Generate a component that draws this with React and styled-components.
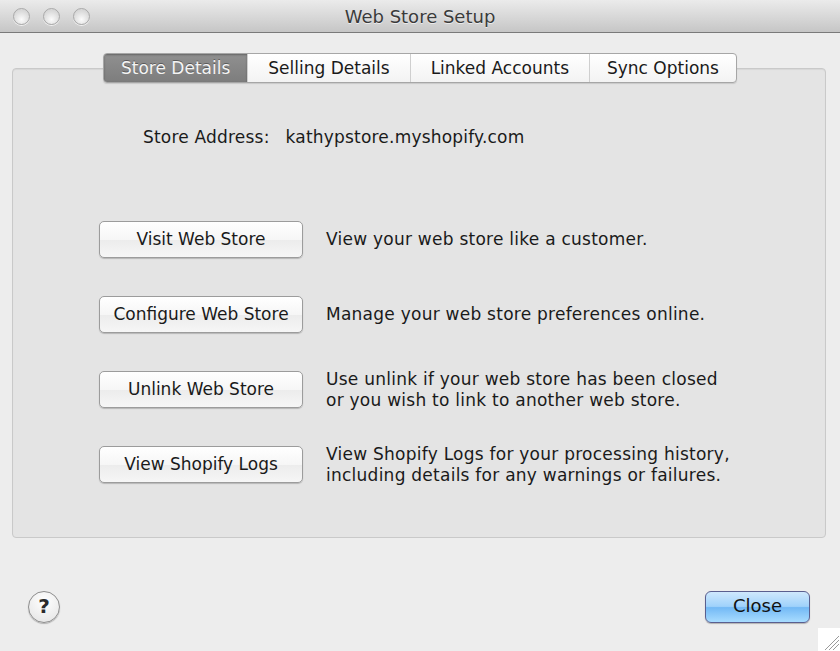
import React from "react";
import styled, { createGlobalStyle } from "styled-components";

const Global = createGlobalStyle`
  html, body {
    margin: 0;
    padding: 0;
    background: #ededed;
  }
  body {
    font-family: "DejaVu Sans", "Liberation Sans", sans-serif;
    color: #1a1a1a;
  }
`;

const Window = styled.div`
  width: 840px;
  height: 651px;
  display: flex;
  flex-direction: column;
  background: #ededed;
  position: relative;
  overflow: hidden;
`;

const TitleBar = styled.div`
  height: 33px;
  flex: none;
  display: flex;
  align-items: center;
  position: relative;
  background: linear-gradient(#ebebeb, #d5d5d5 60%, #c6c6c6);
  border-bottom: 1px solid #7a7a7a;
  box-sizing: border-box;
  padding-left: 13px;
  gap: 13px;
`;

const Light = styled.span`
  width: 17px;
  height: 17px;
  border-radius: 50%;
  background: radial-gradient(circle at 50% 70%, #fbfbfb, #d8d8d8 70%);
  border: 1px solid #a9a9a9;
  box-sizing: border-box;
  box-shadow: 0 1px 0 rgba(255, 255, 255, 0.7);
`;

const Title = styled.div`
  position: absolute;
  left: 0;
  right: 0;
  top: 0;
  bottom: 0;
  display: flex;
  align-items: center;
  justify-content: center;
  font-size: 18px;
  color: #3a3a3a;
  text-shadow: 0 1px 0 rgba(255, 255, 255, 0.6);
  pointer-events: none;
`;

const Body = styled.div`
  flex: 1;
  display: flex;
  flex-direction: column;
  padding: 20px 14px 0 12px;
`;

const TabArea = styled.div`
  display: flex;
  flex-direction: column;
  align-items: center;
`;

const Tabs = styled.div`
  display: flex;
  height: 30px;
  margin-left: 2px;
  border: 1px solid #a6a6a6;
  border-radius: 4px;
  background: linear-gradient(#ffffff, #f3f3f3);
  box-shadow: 0 1px 1px rgba(0, 0, 0, 0.12);
  overflow: hidden;
  position: relative;
  z-index: 1;
  box-sizing: border-box;
`;

const Tab = styled.div`
  display: flex;
  align-items: center;
  justify-content: center;
  padding: 0 ${(p) => p.$pad}px;
  font-size: 17px;
  color: ${(p) => (p.$active ? "#f4f4f4" : "#1a1a1a")};
  background: ${(p) =>
    p.$active ? "linear-gradient(#909090, #7d7d7d)" : "transparent"};
  text-shadow: ${(p) => (p.$active ? "0 -1px 0 rgba(0,0,0,0.35)" : "none")};
  box-shadow: ${(p) => (p.$active ? "inset 0 1px 2px rgba(0,0,0,0.3)" : "none")};
  & + & {
    border-left: 1px solid #cfcfcf;
  }
  &:nth-child(2) {
    border-left-color: #8a8a8a;
  }
`;

const Panel = styled.div`
  margin-top: -15px;
  height: 470px;
  box-sizing: border-box;
  background: #e4e4e4;
  border: 1px solid #c9c9c9;
  border-radius: 4px;
  box-shadow: inset 0 1px 1px rgba(0, 0, 0, 0.06);
  align-self: stretch;
  padding: 56px 0 0 86px;
  display: flex;
  flex-direction: column;
`;

const Address = styled.div`
  font-size: 17px;
  letter-spacing: 0.2px;
  padding-left: 44px;
  height: 24px;
  display: flex;
  align-items: center;
  gap: 16px;
  margin-bottom: 72px;
`;

const Rows = styled.div`
  display: flex;
  flex-direction: column;
  gap: 38px;
`;

const Row = styled.div`
  display: flex;
  align-items: center;
  height: 37px;
  gap: 23px;
`;

const Button = styled.button`
  width: 204px;
  height: 37px;
  flex: none;
  font-family: inherit;
  font-size: 17px;
  color: #1a1a1a;
  border: 1px solid #9c9c9c;
  border-radius: 5px;
  background: linear-gradient(#ffffff, #f6f6f6 50%, #ececec 51%, #f6f6f6);
  box-shadow: 0 1px 1px rgba(0, 0, 0, 0.2);
  padding: 0 0 2px;
  white-space: nowrap;
`;

const Desc = styled.div`
  font-size: 17px;
  letter-spacing: 0.25px;
  line-height: 21px;
  color: #1a1a1a;
  white-space: nowrap;
`;

const Footer = styled.div`
  flex: 1;
  display: flex;
  align-items: center;
  justify-content: space-between;
  padding: 24px 16px 0 16px;
`;

const Help = styled.div`
  width: 32px;
  height: 32px;
  border-radius: 50%;
  box-sizing: border-box;
  border: 1px solid #8e8e8e;
  background: radial-gradient(circle at 50% 30%, #ffffff, #e8e8e8 80%);
  box-shadow: 0 1px 1px rgba(0, 0, 0, 0.25);
  display: flex;
  align-items: center;
  justify-content: center;
  font-size: 20px;
  font-weight: bold;
  color: #2a2a2a;
  padding-bottom: 1px;
`;

const CloseButton = styled.button`
  width: 105px;
  height: 32px;
  font-family: inherit;
  font-size: 18px;
  color: #111;
  border: 1px solid #5a5f8f;
  border-radius: 6px;
  background: linear-gradient(#cfe8fd, #9fd2fb 48%, #73b9f5 52%, #a8dcff);
  box-shadow: 0 1px 1px rgba(0, 0, 0, 0.25);
  padding: 0 0 2px;
`;

const Grip = styled.svg`
  position: absolute;
  right: 0;
  bottom: 0;
  background: #ffffff;
`;

const rows = [
  ["Visit Web Store", ["View your web store like a customer."]],
  ["Configure Web Store", ["Manage your web store preferences online."]],
  [
    "Unlink Web Store",
    ["Use unlink if your web store has been closed", "or you wish to link to another web store."],
  ],
  [
    "View Shopify Logs",
    ["View Shopify Logs for your processing history,", "including details for any warnings or failures."],
  ],
];

const tabs = [
  ["Store Details", 17, true],
  ["Selling Details", 20],
  ["Linked Accounts", 20],
  ["Sync Options", 17],
];

export default function App() {
  return (
    <Window>
      <Global />
      <TitleBar>
        <Light />
        <Light />
        <Light />
        <Title>Web Store Setup</Title>
      </TitleBar>
      <Body>
        <TabArea>
          <Tabs>
            {tabs.map(([t, pad, active]) => (
              <Tab key={t} $pad={pad} $active={active}>
                {t}
              </Tab>
            ))}
          </Tabs>
          <Panel>
            <Address>
              <span>Store Address:</span>
              <span>kathypstore.myshopify.com</span>
            </Address>
            <Rows>
              {rows.map(([label, lines]) => (
                <Row key={label}>
                  <Button>{label}</Button>
                  <Desc>
                    {lines.map((l) => (
                      <div key={l}>{l}</div>
                    ))}
                  </Desc>
                </Row>
              ))}
            </Rows>
          </Panel>
        </TabArea>
        <Footer>
          <Help>?</Help>
          <CloseButton>Close</CloseButton>
        </Footer>
      </Body>
      <Grip width="22" height="23" viewBox="0 0 22 23">
        <g stroke="#9a9a9a" strokeWidth="1">
          <line x1="7" y1="22" x2="21" y2="8" />
          <line x1="11" y1="22" x2="21" y2="12" />
          <line x1="15" y1="22" x2="21" y2="16" />
        </g>
      </Grip>
    </Window>
  );
}
